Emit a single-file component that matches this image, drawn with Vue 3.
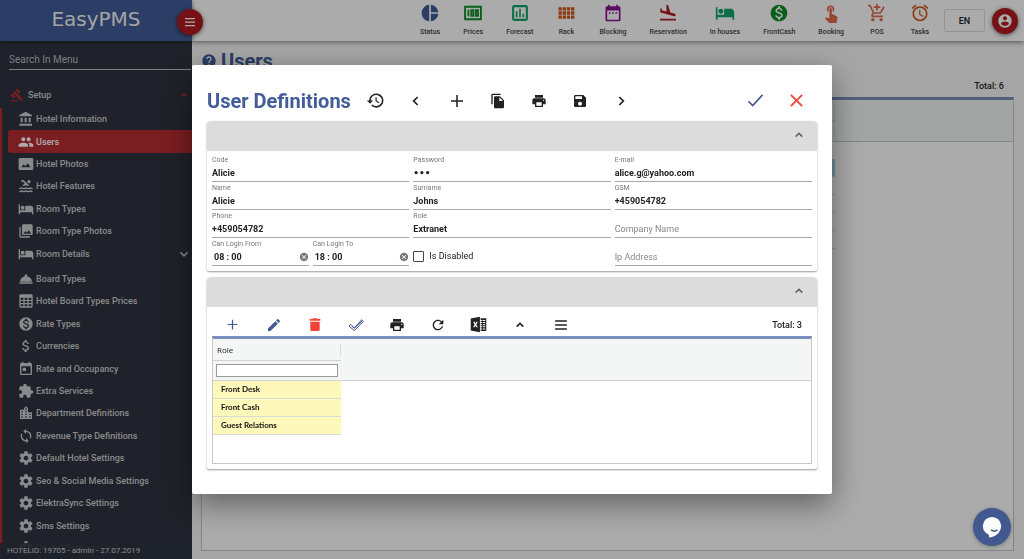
<template>
  <div class="app">
    <aside class="sidebar">
      <div class="brand">
        <span>EasyPMS</span>
        <button class="round menu-toggle" aria-label="Toggle menu"><Icon name="menu" /></button>
      </div>
      <input class="menu-search" type="text" placeholder="Search In Menu" aria-label="Search In Menu">
      <button class="group" @click="state.setupOpen = !state.setupOpen">
        <Icon name="gavel" class="group-icon" />
        <span>Setup</span>
        <Icon name="up" class="group-arrow" />
      </button>
      <nav v-if="state.setupOpen" class="side-menu">
        <a
          v-for="item in menu"
          :key="item.label"
          href="#"
          class="menu-item"
          :class="{ active: item.label === state.active, parent: item.children }"
          @click.prevent="state.active = item.label"
        >
          <Icon :name="item.icon" />
          <span>{{ item.label }}</span>
          <Icon v-if="item.children" name="down" class="menu-arrow" />
        </a>
      </nav>
      <div class="status">HOTELID: 19705 - admin - 27.07.2019</div>
    </aside>

    <div class="page">
      <header class="topbar">
        <a v-for="s in shortcuts" :key="s.label" href="#" class="shortcut">
          <Icon :name="s.icon" :class="s.tone" />
          <span>{{ s.label }}</span>
        </a>
        <div class="account">
          <button class="lang">EN</button>
          <button class="round" aria-label="Account"><Icon name="account" /></button>
        </div>
      </header>
      <main class="content">
        <h1 class="page-title"><Icon name="help" />Users</h1>
        <div class="page-total">Total: 6</div>
        <div class="users-grid">
          <div class="users-head">
            <div class="users-cell"></div>
            <div class="users-cell"></div>
          </div>
          <div v-for="n in 5" :key="n" class="users-row" :class="{ selected: n === 1 }"></div>
        </div>
      </main>
    </div>

    <div class="overlay">
      <section class="dialog" role="dialog" aria-labelledby="dialog-title">
        <div class="dialog-bar">
          <h2 id="dialog-title">User Definitions</h2>
          <button v-for="a in dialogActions" :key="a" class="tool" :class="a" :aria-label="a"><Icon :name="a" /></button>
          <span class="spacer"></span>
          <button class="tool blue large" aria-label="Confirm"><Icon name="check" /></button>
          <button class="tool red large" aria-label="Close"><Icon name="close" /></button>
        </div>

        <div class="panel">
          <button class="panel-head" aria-label="Collapse"><Icon name="up" /></button>
          <form class="fields" @submit.prevent>
            <div v-for="f in fields" :key="f.id" class="field">
              <label :for="f.id" :class="{ hidden: !f.value }">{{ f.label }}</label>
              <input :id="f.id" v-model="f.value" :type="f.type || 'text'" :placeholder="f.label" autocomplete="off">
            </div>
            <div class="times">
              <div v-for="t in times" :key="t.id" class="field time">
                <label :for="t.id">{{ t.label }}</label>
                <input :id="t.id" v-model="t.value" type="text">
                <button class="clear" type="button" aria-label="Clear" @click="t.value = ''"><Icon name="cancel" /></button>
              </div>
            </div>
            <div class="disabled">
              <input id="is-disabled" type="checkbox">
              <label for="is-disabled">Is Disabled</label>
            </div>
            <div class="field">
              <label for="ip" class="hidden">Ip Address</label>
              <input id="ip" type="text" placeholder="Ip Address">
            </div>
          </form>
        </div>

        <div class="panel">
          <button class="panel-head" aria-label="Collapse"><Icon name="up" /></button>
          <div class="grid-area">
            <div class="grid-bar">
              <button v-for="t in gridTools" :key="t.icon" class="tool" :class="[t.icon, t.tone]" :aria-label="t.icon"><Icon :name="t.icon" /></button>
              <span class="spacer"></span>
              <span class="total">Total: 3</span>
            </div>
            <div class="grid">
              <table>
                <thead>
                  <tr><th scope="col"><span>Role</span></th><td></td></tr>
                  <tr class="filter"><td><input type="text" aria-label="Filter by role"></td><td></td></tr>
                </thead>
                <tbody>
                  <tr v-for="role in roles" :key="role"><td>{{ role }}</td></tr>
                </tbody>
              </table>
            </div>
          </div>
        </div>
      </section>
    </div>

    <button class="chat" aria-label="Chat">
      <svg viewBox="0 0 24 24">
        <circle cx="12" cy="11" r="10" fill="#fff" />
        <path d="M8 18l1 5.500c4-.5 8-2 11-6z" fill="#fff" />
        <path d="M11 15.200c2 1.600 5 1.600 7 0" fill="none" stroke="#41598f" stroke-width="1.600" />
      </svg>
    </button>
  </div>
</template>

<script setup>
import { h, reactive } from 'vue'

// filled shapes
const fills = {
  gavel: 'M1 21h12v2H1v-2zM5.245 8.070l2.830-2.827 14.140 14.142-2.828 2.828L5.245 8.070zM12.317 1l5.657 5.656-2.830 2.830-5.654-5.660L12.317 1zM3.825 9.485l5.657 5.657-2.828 2.828-5.657-5.657 2.828-2.828z',
  bank: 'M4 10v7h3v-7H4zm6 0v7h3v-7h-3zM2 22h19v-3H2v3zm14-12v7h3v-7h-3zm-4.500-9L2 6v2h19V6l-9.500-5z',
  people: 'M16 11c1.660 0 2.990-1.340 2.990-3S17.660 5 16 5c-1.660 0-3 1.340-3 3s1.340 3 3 3zm-8 0c1.660 0 2.990-1.340 2.990-3S9.660 5 8 5C6.340 5 5 6.340 5 8s1.340 3 3 3zm0 2c-2.330 0-7 1.170-7 3.500V19h14v-2.500c0-2.330-4.670-3.500-7-3.500zm8 0c-.29 0-.62.02-.97.05 1.160.84 1.970 1.970 1.970 3.450V19h6v-2.500c0-2.330-4.670-3.500-7-3.500z',
  photo: 'M21 3H3C2 3 1 4 1 5v14c0 1.100.9 2 2 2h18c1 0 2-1 2-2V5c0-1-1-2-2-2zM5 17l3.500-4.500 2.500 3.010L14.500 11l4.500 6H5z',
  pool: 'M8.670 12c.56 0 .78-.13 1.150-.36.46-.27 1.080-.64 2.190-.64 1.110 0 1.730.37 2.180.64.37.22.6.36 1.150.36s.78-.13 1.150-.36c.12-.07.26-.15.41-.23L10.480 5C8.930 3.450 7.500 2.990 5 3v2.500c1.820-.01 2.890.39 4 1.500l1 1-3.250 3.250c.31.12.56.27.77.39.37.23.59.36 1.150.36zM16.500 3a2.500 2.500 0 1 1 0 5 2.500 2.500 0 0 1 0-5z',
  hotel: 'M7 13c1.660 0 3-1.340 3-3S8.660 7 7 7s-3 1.340-3 3 1.340 3 3 3zm12-6h-8v7H3V5H1v15h2v-3h18v3h2v-9c0-2.210-1.790-4-4-4z',
  photos: 'M22 16V4c0-1.100-.9-2-2-2H8c-1.100 0-2 .9-2 2v12c0 1.100.9 2 2 2h12c1.100 0 2-.9 2-2zm-11-4l2.030 2.710L16 11l4 5H8l3-4zM2 6v14c0 1.100.9 2 2 2h14v-2H4V6H2z',
  service: 'M2 17h20v2H2zm11.840-9.210c.1-.24.16-.51.16-.79 0-1.100-.9-2-2-2s-2 .9-2 2c0 .28.06.55.16.79C6.250 8.600 3.270 11.930 3 16h18c-.27-4.070-3.250-7.400-7.160-8.210z',
  grid: 'M4 2h16a2 2 0 0 1 2 2v16a2 2 0 0 1-2 2H4a2 2 0 0 1-2-2V4a2 2 0 0 1 2-2zM4 7v3.500h4V7zM10 7v3.500h4V7zM16 7v3.500h4V7zM4 12v3h4v-3zM10 12v3h4v-3zM16 12v3h4v-3zM4 17v3h4v-3zM10 17v3h4v-3zM16 17v3h4v-3z',
  money: 'M12 2C6.480 2 2 6.480 2 12s4.480 10 10 10 10-4.480 10-10S17.520 2 12 2zm1.410 16.090V20h-2.670v-1.930c-1.710-.36-3.160-1.460-3.270-3.400h1.960c.1 1.050.82 1.870 2.650 1.870 1.960 0 2.400-.98 2.400-1.590 0-.83-.44-1.610-2.670-2.140-2.480-.6-4.180-1.620-4.180-3.670 0-1.720 1.390-2.840 3.110-3.210V4h2.670v1.950c1.860.45 2.790 1.860 2.850 3.390H14.300c-.05-1.110-.64-1.870-2.220-1.870-1.500 0-2.400.68-2.400 1.640 0 .84.65 1.390 2.670 1.910s4.180 1.390 4.180 3.910c-.01 1.830-1.380 2.830-3.120 3.160z',
  dollar: 'M11.800 10.900c-2.270-.59-3-1.200-3-2.150 0-1.090 1.010-1.850 2.700-1.850 1.780 0 2.440.85 2.500 2.100h2.210c-.07-1.720-1.120-3.300-3.210-3.810V3h-3v2.160c-1.940.42-3.500 1.680-3.500 3.610 0 2.310 1.910 3.460 4.700 4.130 2.500.6 3 1.480 3 2.410 0 .69-.49 1.790-2.700 1.790-2.060 0-2.870-.92-2.980-2.100h-2.200c.12 2.190 1.760 3.420 3.680 3.830V21h3v-2.150c1.950-.37 3.500-1.500 3.500-3.550 0-2.840-2.430-3.810-4.700-4.400z',
  today: 'M19 3h-1V1h-2v2H8V1H6v2H5c-1.110 0-1.990.9-1.990 2L3 19c0 1.100.89 2 2 2h14c1.100 0 2-.9 2-2V5c0-1.100-.9-2-2-2zm0 16H5V8h14v11zM7 10h5v5H7z',
  extension: 'M20.500 11H19V7c0-1.100-.9-2-2-2h-4V3.500C13 2.120 11.880 1 10.500 1S8 2.120 8 3.500V5H4c-1.100 0-1.990.9-1.990 2v3.800H3.500c1.490 0 2.700 1.210 2.700 2.700s-1.210 2.700-2.700 2.700H2V20c0 1.100.9 2 2 2h3.800v-1.500c0-1.490 1.210-2.700 2.700-2.700 1.490 0 2.700 1.210 2.700 2.700V22H17c1.100 0 2-.9 2-2v-4h1.500c1.380 0 2.500-1.120 2.500-2.500S21.880 11 20.500 11z',
  city: 'M15 11V5l-3-3-3 3v2H3v14h18V11h-6zm-8 8H5v-2h2v2zm0-4H5v-2h2v2zm0-4H5V9h2v2zm6 8h-2v-2h2v2zm0-4h-2v-2h2v2zm0-4h-2V9h2v2zm0-4h-2V5h2v2zm6 12h-2v-2h2v2zm0-4h-2v-2h2v2z',
  sync: 'M12 4V1L8 5l4 4V6c3.310 0 6 2.690 6 6 0 1.010-.25 1.970-.7 2.800l1.460 1.460C19.540 15.030 20 13.570 20 12c0-4.420-3.580-8-8-8zm0 14c-3.310 0-6-2.690-6-6 0-1.010.25-1.970.7-2.800L5.240 7.740C4.460 8.970 4 10.430 4 12c0 4.420 3.580 8 8 8v3l4-4-4-4v3z',
  settings: 'M19.430 12.980c.04-.32.07-.64.07-.98s-.03-.66-.07-.98l2.110-1.650c.19-.15.24-.42.12-.64l-2-3.460c-.12-.22-.39-.3-.61-.22l-2.490 1c-.52-.4-1.080-.73-1.690-.98l-.38-2.650C14.460 2.180 14.250 2 14 2h-4c-.25 0-.46.18-.49.42l-.38 2.650c-.61.25-1.170.59-1.690.98l-2.490-1c-.23-.09-.49 0-.61.22l-2 3.460c-.13.22-.07.49.12.64l2.110 1.650c-.04.32-.07.65-.07.98s.03.66.07.98l-2.110 1.650c-.19.15-.24.42-.12.64l2 3.460c.12.22.39.3.61.22l2.490-1c.52.4 1.080.73 1.690.98l.38 2.650c.03.24.24.42.49.42h4c.25 0 .46-.18.49-.42l.38-2.650c.61-.25 1.170-.59 1.690-.98l2.490 1c.23.09.49 0 .61-.22l2-3.460c.12-.22.07-.49-.12-.64l-2.110-1.650zM12 15.500c-1.930 0-3.500-1.570-3.500-3.500s1.570-3.500 3.500-3.500 3.500 1.570 3.500 3.500-1.570 3.500-3.500 3.500z',
  pie: 'M11 2v20c-5.070-.5-9-4.790-9-10s3.930-9.500 9-10zm2.030 0v8.990H22c-.47-4.740-4.240-8.520-8.970-8.990zm0 11.010V22c4.740-.47 8.500-4.250 8.970-8.990h-8.970z',
  chart: 'M9 17H7v-7h2v7zm4 0h-2V7h2v10zm4 0h-2v-4h2v4zM19 19H5V5h14v14zm0-16.500H5A2.500 2.500 0 0 0 2.500 5v14A2.500 2.500 0 0 0 5 21.500h14a2.500 2.500 0 0 0 2.500-2.500V5A2.500 2.500 0 0 0 19 2.500z',
  rack: 'M3 9h4V5H3v4zm0 5h4v-4H3v4zm5 0h4v-4H8v4zm5 0h4v-4h-4v4zM8 9h4V5H8v4zm5-4v4h4V5h-4zm5 9h4v-4h-4v4zM3 19h4v-4H3v4zm5 0h4v-4H8v4zm5 0h4v-4h-4v4zm5 0h4v-4h-4v4zm0-14v4h4V5h-4z',
  calendar: 'M9 11H7v2h2v-2zm4 0h-2v2h2v-2zm4 0h-2v2h2v-2zm2-7h-1V2h-2v2H8V2H6v2H5c-1.110 0-1.990.9-1.990 2L3 20c0 1.100.89 2 2 2h14c1.100 0 2-.9 2-2V6c0-1.100-.9-2-2-2zm0 16H5V9h14v11z',
  landing: 'M2.500 19h19v2h-19zm7.180-5.730l4.350 1.160 5.310 1.420c.8.21 1.620-.26 1.840-1.060.21-.8-.26-1.620-1.060-1.840l-5.310-1.420-2.760-9.020L10.120 2v8.280L5.150 8.950l-.93-2.320-1.450-.39v5.170l1.600.43 5.310 1.430z',
  touch: 'M9 11.240V7.500C9 6.120 10.120 5 11.500 5S14 6.120 14 7.500v3.740c1.210-.81 2-2.180 2-3.740C16 5.010 13.990 3 11.500 3S7 5.010 7 7.500c0 1.560.79 2.930 2 3.740zm9.840 4.630l-4.540-2.260c-.17-.07-.35-.11-.54-.11H13v-6c0-.83-.67-1.500-1.500-1.500S10 6.670 10 7.500v10.740l-3.430-.72c-.08-.01-.15-.03-.24-.03-.31 0-.59.13-.79.33l-.79.8 4.940 4.940c.27.27.65.44 1.060.44h6.790c.75 0 1.330-.55 1.440-1.280l.75-5.270c.01-.07.02-.14.02-.2 0-.62-.38-1.160-.91-1.380z',
  cart: 'M11 9h2V6h3V4h-3V1h-2v3H8v2h3v3zm-4 9c-1.100 0-1.990.9-1.990 2S5.900 22 7 22s2-.9 2-2-.9-2-2-2zm10 0c-1.100 0-1.990.9-1.990 2s.89 2 1.990 2 2-.9 2-2-.9-2-2-2zm-9.830-3.250l.03-.12.9-1.630h7.450c.75 0 1.410-.41 1.750-1.030l3.860-7.010L19.420 4h-.01l-1.100 2-2.760 5H8.530l-.13-.27L6.160 6l-.95-2-.94-2H1v2h2l3.600 7.590-1.350 2.450c-.16.28-.25.61-.25.96 0 1.100.9 2 2 2h12v-2H7.420c-.13 0-.25-.11-.25-.25z',
  alarm: 'M22 5.720l-4.600-3.860-1.290 1.530 4.600 3.860L22 5.720zM7.880 3.390L6.600 1.860 2 5.710l1.290 1.530 4.590-3.850zM12.500 8H11v6l4.750 2.850.75-1.230-4-2.370V8zM12 4c-4.970 0-9 4.030-9 9s4.020 9 9 9c4.970 0 9-4.030 9-9s-4.030-9-9-9zm0 16c-3.870 0-7-3.130-7-7s3.130-7 7-7 7 3.130 7 7-3.130 7-7 7z',
  account: 'M12 2C6.480 2 2 6.480 2 12s4.480 10 10 10 10-4.480 10-10S17.520 2 12 2zm0 3c1.660 0 3 1.340 3 3s-1.340 3-3 3-3-1.340-3-3 1.340-3 3-3zm0 14.200c-2.500 0-4.710-1.280-6-3.220.03-1.990 4-3.080 6-3.080 1.990 0 5.970 1.090 6 3.080-1.290 1.940-3.500 3.220-6 3.220z',
  help: 'M12 2C6.480 2 2 6.480 2 12s4.480 10 10 10 10-4.480 10-10S17.520 2 12 2zm1 17h-2v-2h2v2zm2.070-7.750l-.9.92C13.450 12.900 13 13.500 13 15h-2v-.5c0-1.100.45-2.100 1.170-2.830l1.240-1.260c.37-.36.59-.86.59-1.410 0-1.100-.9-2-2-2s-2 .9-2 2H8c0-2.210 1.790-4 4-4s4 1.790 4 4c0 .88-.36 1.680-.93 2.250z',
  history: 'M13 3a9 9 0 0 0-9 9H1l3.890 3.890.07.14L9 12H6a7 7 0 1 1 2.050 4.940l-1.420 1.420A9 9 0 1 0 13 3zm-1 5v5l4.280 2.540.72-1.210-3.500-2.080V8H12z',
  copy: 'M16 1H4c-1.100 0-2 .9-2 2v14h2V3h12V1zm-1 4l6 6v10c0 1.100-.9 2-2 2H7.990C6.890 23 6 22.100 6 21l.01-14c0-1.100.89-2 1.990-2h7zm-1 7h5.500L14 6.500V12z',
  print: 'M19 8H5c-1.660 0-3 1.340-3 3v6h4v4h12v-4h4v-6c0-1.660-1.340-3-3-3zm-3 11H8v-5h8v5zm3-7c-.55 0-1-.45-1-1s.45-1 1-1 1 .45 1 1-.45 1-1 1zm-1-9H6v4h12V3z',
  save: 'M17 3H5c-1.110 0-2 .9-2 2v14c0 1.100.89 2 2 2h14c1.100 0 2-.9 2-2V7l-4-4zm-5 16c-1.660 0-3-1.340-3-3s1.340-3 3-3 3 1.340 3 3-1.340 3-3 3zm3-10H5V5h10v4z',
  edit: 'M3 17.250V21h3.750L17.810 9.940l-3.750-3.750L3 17.250zM20.710 7.040c.39-.39.39-1.020 0-1.410l-2.340-2.340c-.39-.39-1.020-.39-1.410 0l-1.830 1.830 3.750 3.750 1.830-1.830z',
  delete: 'M5 19c0 1.100.9 2 2 2h10c1.100 0 2-.9 2-2V7H5v12zM20 3h-4l-1-1H9L8 3H4v2.500h16V3z',
  refresh: 'M17.650 6.350C16.200 4.900 14.210 4 12 4c-4.420 0-7.990 3.580-7.990 8s3.570 8 7.990 8c3.730 0 6.840-2.550 7.730-6h-2.080c-.82 2.330-3.040 4-5.650 4-3.310 0-6-2.690-6-6s2.690-6 6-6c1.660 0 3.140.69 4.220 1.780L13 11h7V4l-2.350 2.350z',
  excel: 'M1 3.500L14 1v22L1 20.500zM4.500 8l2 4-2 4h2l1.200-2.600L9 16h2.200L8.800 12 11 8H9l-1.300 2.600L6.600 8zM15 3h8v18h-8v-2h2v-1.500h-2v-1.500h2v-1.500h-2V13h2v-1.500h-2V10h2V8.500h-2V7h2V5.500h-2zM18 5.500V7h3.500V5.500zM18 8.500V10h3.500V8.500zM18 11.500V13h3.500v-1.500zM18 14.500V16h3.500v-1.500zM18 17.500V19h3.500v-1.500z',
  cancel: 'M12 2C6.470 2 2 6.470 2 12s4.470 10 10 10 10-4.470 10-10S17.530 2 12 2zm5 13.590L15.590 17 12 13.410 8.410 17 7 15.590 10.590 12 7 8.410 8.410 7 12 10.590 15.590 7 17 8.410 13.410 12 17 15.590z'
}

// outlined shapes, with their stroke width
const strokes = {
  menu: ['M2 5h20M2 12h20M2 19h20', 2.5],
  up: ['M7 14.500l5-5 5 5', 2.3],
  down: ['M6 9l6 6 6-6', 2.8],
  left: ['M14.500 6l-6 6 6 6', 2.6],
  right: ['M9.500 6l6 6-6 6', 2.6],
  plus: ['M12 3v18M3 12h18', 2.3],
  check: ['M2 13l6 6L22 4', 2.3],
  close: ['M4 4l16 16M20 4L4 20', 2.5],
  checks: ['M1.500 13.500l2.500-2.500 5.500 5.500L20.500 4 23 6.500 9.500 20.500zM5.500 13.500l4 3.500L21 6', 1.5],
  cash: ['M2.500 4.500h19v15h-19zM6.500 8v8M10 8.500h2.500v7H10zM15.500 8.500H18v7h-2.500z', 2.2],
  pool: ['M2 16c1.700 0 1.700-1 3.350-1s1.650 1 3.300 1 1.700-1 3.350-1 1.650 1 3.300 1 1.700-1 3.350-1 1.650 1 3.300 1M2 20.500c1.700 0 1.700-1 3.350-1s1.650 1 3.300 1 1.700-1 3.350-1 1.650 1 3.300 1 1.700-1 3.350-1 1.650 1 3.300 1', 2]
}

const Icon = (props) => h('svg', { viewBox: '0 0 24 24', 'aria-hidden': 'true' }, [
  fills[props.name] && h('path', { d: fills[props.name], fill: 'currentColor', 'fill-rule': 'evenodd' }),
  strokes[props.name] && h('path', { d: strokes[props.name][0], fill: 'none', stroke: 'currentColor', 'stroke-width': strokes[props.name][1] })
])
Icon.props = ['name']

const state = reactive({ setupOpen: true, active: 'Users' })

const menu = [
  { label: 'Hotel Information', icon: 'bank' },
  { label: 'Users', icon: 'people' },
  { label: 'Hotel Photos', icon: 'photo' },
  { label: 'Hotel Features', icon: 'pool' },
  { label: 'Room Types', icon: 'hotel' },
  { label: 'Room Type Photos', icon: 'photos' },
  { label: 'Room Details', icon: 'hotel', children: true },
  { label: 'Board Types', icon: 'service' },
  { label: 'Hotel Board Types Prices', icon: 'grid' },
  { label: 'Rate Types', icon: 'money' },
  { label: 'Currencies', icon: 'dollar' },
  { label: 'Rate and Occupancy', icon: 'today' },
  { label: 'Extra Services', icon: 'extension' },
  { label: 'Department Definitions', icon: 'city' },
  { label: 'Revenue Type Definitions', icon: 'sync' },
  { label: 'Default Hotel Settings', icon: 'settings' },
  { label: 'Seo & Social Media Settings', icon: 'settings' },
  { label: 'ElektraSync Settings', icon: 'settings' },
  { label: 'Sms Settings', icon: 'settings' },
  { label: 'Packet Settings', icon: 'settings' }
]

const shortcuts = [
  { label: 'Status', icon: 'pie', tone: 'navy' },
  { label: 'Prices', icon: 'cash', tone: 'green' },
  { label: 'Forecast', icon: 'chart', tone: 'teal' },
  { label: 'Rack', icon: 'rack', tone: 'orange' },
  { label: 'Blocking', icon: 'calendar', tone: 'purple' },
  { label: 'Reservation', icon: 'landing', tone: 'crimson' },
  { label: 'In houses', icon: 'hotel', tone: 'teal' },
  { label: 'FrontCash', icon: 'money', tone: 'green' },
  { label: 'Booking', icon: 'touch', tone: 'coral' },
  { label: 'POS', icon: 'cart', tone: 'coral' },
  { label: 'Tasks', icon: 'alarm', tone: 'orange' }
]

const dialogActions = ['history', 'left', 'plus', 'copy', 'print', 'save', 'right']

const fields = reactive([
  { id: 'code', label: 'Code', value: 'Alicie' },
  { id: 'password', label: 'Password', value: 'abc', type: 'password' },
  { id: 'email', label: 'E-mail', value: 'alice.g@yahoo.com' },
  { id: 'name', label: 'Name', value: 'Alicie' },
  { id: 'surname', label: 'Surname', value: 'Johns' },
  { id: 'gsm', label: 'GSM', value: '+459054782' },
  { id: 'phone', label: 'Phone', value: '+459054782' },
  { id: 'role', label: 'Role', value: 'Extranet' },
  { id: 'company', label: 'Company Name', value: '' }
])

const times = reactive([
  { id: 'from', label: 'Can Login From', value: '08 : 00' },
  { id: 'to', label: 'Can Login To', value: '18 : 00' }
])

const gridTools = [
  { icon: 'plus', tone: 'blue' },
  { icon: 'edit', tone: 'blue' },
  { icon: 'delete', tone: 'red' },
  { icon: 'checks', tone: 'blue' },
  { icon: 'print' },
  { icon: 'refresh' },
  { icon: 'excel' },
  { icon: 'up' },
  { icon: 'menu' }
]

const roles = ['Front Desk', 'Front Cash', 'Guest Relations']
</script>

<style>
body {
  background: #f7f7f7;
}
</style>

<style scoped>
.app {
  display: flex;
  height: 100vh;
  overflow: hidden;
  font-family: Roboto, sans-serif;
  font-size: 9px;
  color: #222;
}
.app *,
.app *::before {
  box-sizing: border-box;
}
button {
  display: flex;
  align-items: center;
  justify-content: center;
  padding: 0;
  border: 0;
  background: none;
  color: inherit;
  font: inherit;
  cursor: pointer;
}
input {
  min-width: 0;
  font: inherit;
}
a {
  color: inherit;
  text-decoration: none;
}
svg {
  display: block;
  flex: none;
  width: 16px;
  height: 16px;
}
.spacer {
  flex: 1;
}

/* sidebar */
.sidebar {
  position: relative;
  z-index: 2;
  display: flex;
  flex-direction: column;
  flex: none;
  width: 192px;
  background: #2f333f;
  color: #cdced0;
}
.brand {
  position: relative;
  display: flex;
  align-items: center;
  justify-content: center;
  flex: none;
  height: 41px;
  padding-bottom: 3px;
  background: #425d98;
  box-shadow: 0 1px 4px rgba(0,0,0,0.5);
  color: #f4f4f4;
  font-family: 'DejaVu Sans', sans-serif;
  font-size: 20px;
}
.round {
  width: 26px;
  height: 26px;
  border-radius: 50%;
  background: #b01c20;
  box-shadow: 0 1px 4px rgba(0,0,0,0.6);
  color: #fff;
}
.menu-toggle {
  position: absolute;
  top: 9px;
  right: -11px;
}
.menu-toggle svg {
  width: 14px;
  height: 12px;
}
.menu-search {
  flex: none;
  height: 20px;
  margin: 9px 1px 0 9px;
  padding: 0;
  border: 0;
  border-bottom: 1px solid #bbb;
  background: none;
  color: inherit;
  font-size: 10px;
}
.menu-search::placeholder {
  color: #bcbdc0;
}
.group {
  flex: none;
  height: 27px;
  margin-top: 11px;
  padding: 0 1px 0 10px;
  font-weight: 500;
}
.group span {
  flex: 1;
  padding-left: 4px;
  text-align: left;
}
.group-icon {
  width: 14px;
  height: 14px;
  color: #b82d32;
}
.group-arrow {
  color: #c8323a;
}
.menu-arrow,
.group-arrow {
  width: 14px;
  height: 14px;
}
.side-menu {
  display: flex;
  flex-direction: column;
  flex: 1;
  border-left: 2px solid #b82d32;
}
.menu-item {
  display: flex;
  align-items: center;
  flex: 1;
  gap: 2px;
  min-height: 22px;
  margin-left: 6px;
  padding: 0 1px 0 10px;
  border-radius: 3px 0 0 3px;
  font-weight: 500;
}
.menu-item span {
  flex: 1;
}
.menu-item.parent {
  margin-bottom: 3px;
}
.menu-item.active {
  background: #b82d32;
  color: #fff;
}
.status {
  position: absolute;
  right: 0;
  bottom: 0;
  left: 0;
  height: 16px;
  padding-left: 7px;
  background: rgba(47,51,63,0.92);
  font-size: 8px;
  line-height: 16px;
}

/* page behind the dialog */
.page {
  display: flex;
  flex-direction: column;
  flex: 1;
  min-width: 0;
}
.topbar {
  display: flex;
  justify-content: flex-end;
  flex: none;
  gap: 23px;
  height: 41px;
  padding-right: 6px;
  background: #fff;
  box-shadow: 0 1px 5px rgba(0,0,0,0.5);
}
.shortcut {
  display: flex;
  flex-direction: column;
  align-items: center;
  gap: 4px;
  min-width: 20px;
  padding-top: 3px;
  color: #444;
  font-size: 7px;
  font-weight: 500;
  line-height: 11px;
}
.shortcut svg {
  width: 20px;
  height: 20px;
}
.navy { color: #425d98; }
.green { color: #0c8f24; }
.teal { color: #0fa56b; }
.orange { color: #d05a1c; }
.purple { color: #8a1193; }
.crimson { color: #b01c20; }
.coral { color: #e2694a; }
.account {
  display: flex;
  align-items: center;
  gap: 7px;
  margin-left: -9px;
}
.lang {
  width: 41px;
  height: 23px;
  border: 1px solid #ddd;
  border-radius: 2px;
  font-weight: 500;
}
.content {
  display: flex;
  flex-direction: column;
  flex: 1;
  padding: 8px 10px 8px 9px;
}
.page-title {
  display: flex;
  align-items: center;
  gap: 4px;
  margin: 0;
  color: #425d98;
  font-size: 20px;
  line-height: 24px;
}
.page-total {
  padding: 7px 10px 4px;
  font-weight: 500;
  line-height: 13px;
  text-align: right;
}
.users-grid {
  flex: 1;
  border: 1px solid #c3c9cc;
  border-top: 3px solid #7b8fbb;
  background: #fff;
}
.users-head {
  height: 42px;
  margin-bottom: 17px;
  border-bottom: 1px solid #c3c9cc;
  background: #f4f6f6;
}
.users-cell {
  width: 78%;
  height: 21px;
  border-right: 1px solid #dde0e2;
  border-bottom: 1px solid #d2d6d8;
}
.users-row {
  width: 78%;
  height: 18px;
  border-bottom: 1px solid #d8dbdd;
}
.users-row.selected {
  background: #a5d5f2;
}

/* dialog */
.overlay {
  position: fixed;
  inset: 0;
  z-index: 5;
  display: flex;
  align-items: center;
  justify-content: center;
  background: rgba(0,0,0,0.33);
}
.dialog {
  width: 62.5%;
  padding: 15px 15px 25px;
  border-radius: 2px;
  background: #fff;
  box-shadow: 0 10px 32px rgba(0,0,0,0.45);
}
.dialog-bar {
  display: flex;
  align-items: center;
  height: 41px;
}
.dialog-bar h2 {
  margin: 0 4px 0 0;
  color: #425d98;
  font-size: 20px;
}
.tool {
  width: 41px;
  height: 28px;
}
.tool.history svg {
  width: 19px;
  height: 19px;
}
.tool.large svg {
  width: 17px;
  height: 17px;
}
.tool.plus.blue svg {
  width: 13px;
  height: 13px;
}
.tool.menu svg {
  width: 14px;
  height: 14px;
}
.tool.excel svg {
  width: 17px;
  height: 17px;
}
.blue { color: #41598f; }
.red { color: #f44336; }
.panel {
  border-radius: 4px 4px 2px 2px;
  box-shadow: 0 1px 2px rgba(0,0,0,0.4);
}
.panel + .panel {
  margin-top: 6px;
}
.panel-head {
  justify-content: flex-end;
  width: 100%;
  height: 30px;
  padding: 0 10px 2px 0;
  border-radius: 4px 4px 0 0;
  background: #dcdcdc;
  color: #666;
}
.fields {
  display: grid;
  grid-template-columns: repeat(3, 1fr);
  gap: 0 4px;
  padding: 3px 5px 5px;
}
.field {
  position: relative;
  display: flex;
  flex-direction: column;
  height: 28px;
}
.field label {
  height: 11px;
  color: #777;
  font-size: 7px;
  line-height: 12px;
}
.field label.hidden {
  visibility: hidden;
}
.field input {
  flex: 1;
  width: 100%;
  padding: 0;
  border: 0;
  border-bottom: 1px solid #aaa;
  background: none;
  color: #222;
  font-weight: 700;
}
.field input[type='password'] {
  font-family: 'DejaVu Sans', sans-serif;
}
.field input::placeholder {
  color: #888;
  font-weight: 400;
}
.times {
  display: flex;
  gap: 4px;
}
.time {
  flex: 1;
}
.time input {
  padding: 0 12px 0 2px;
}
.clear {
  position: absolute;
  right: 0;
  bottom: 4px;
  color: #777;
}
.clear svg {
  width: 10px;
  height: 10px;
}
.disabled {
  display: flex;
  align-items: center;
  gap: 5px;
  padding-top: 8px;
}
.disabled input {
  appearance: none;
  width: 11px;
  height: 11px;
  margin: 0;
  border: 1px solid #444;
  border-radius: 1px;
}
.grid-area {
  padding: 0 5px 5px;
}
.grid-bar {
  display: flex;
  align-items: center;
  height: 29px;
  padding: 6px 10px 0 0;
}
.total {
  font-weight: 500;
}
.grid {
  height: 128px;
  border: 1px solid #c3c9cc;
  border-top: 3px solid #7b8fbb;
  font-family: 'Open Sans', sans-serif;
  font-size: 8px;
}
table {
  width: 100%;
  border-collapse: collapse;
  table-layout: fixed;
}
th,
td {
  padding: 0;
  text-align: left;
}
thead {
  border-bottom: 1px solid #ccd2d8;
  background: #f4f6f6;
}
th {
  width: 128px;
  height: 21px;
  border-bottom: 1px solid #ccd2d8;
  font-weight: 400;
}
th span {
  display: block;
  padding-left: 4px;
  border-right: 1px solid #d5dadd;
}
.filter td {
  height: 20px;
}
.filter input {
  display: block;
  width: 122px;
  height: 13px;
  margin-left: 3px;
  border: 1px solid #999;
  background: #fff;
}
tbody td {
  height: 18px;
  padding-left: 8px;
  border-bottom: 1px solid #d9dcd6;
  background: #fff8bb;
  color: #111;
  font-family: Lato, sans-serif;
  font-weight: 700;
}

.chat {
  position: fixed;
  right: 13px;
  bottom: 13px;
  z-index: 6;
  width: 38px;
  height: 38px;
  border-radius: 50%;
  background: #41598f;
  box-shadow: 0 1px 4px rgba(0,0,0,0.3);
}
.chat svg {
  width: 22px;
  height: 22px;
}
</style>
